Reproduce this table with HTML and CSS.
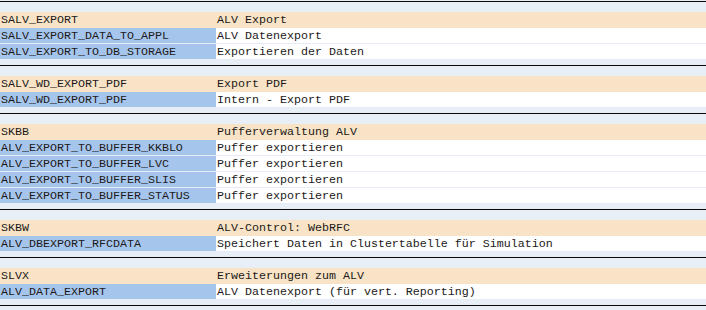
FILE: index.html
```html
<!DOCTYPE html>
<html>
<head>
<meta charset="utf-8">
<link rel="stylesheet" href="styles.css">
</head>
<body>
<div class="list">
  <section class="group">
    <div class="row head"><span class="name">SALV_EXPORT</span><span class="desc">ALV Export</span></div>
    <div class="row"><span class="name">SALV_EXPORT_DATA_TO_APPL</span><span class="desc">ALV Datenexport</span></div>
    <div class="row"><span class="name">SALV_EXPORT_TO_DB_STORAGE</span><span class="desc">Exportieren der Daten</span></div>
  </section>
  <section class="group">
    <div class="row head"><span class="name">SALV_WD_EXPORT_PDF</span><span class="desc">Export PDF</span></div>
    <div class="row"><span class="name">SALV_WD_EXPORT_PDF</span><span class="desc">Intern - Export PDF</span></div>
  </section>
  <section class="group">
    <div class="row head"><span class="name">SKBB</span><span class="desc">Pufferverwaltung ALV</span></div>
    <div class="row"><span class="name">ALV_EXPORT_TO_BUFFER_KKBLO</span><span class="desc">Puffer exportieren</span></div>
    <div class="row"><span class="name">ALV_EXPORT_TO_BUFFER_LVC</span><span class="desc">Puffer exportieren</span></div>
    <div class="row"><span class="name">ALV_EXPORT_TO_BUFFER_SLIS</span><span class="desc">Puffer exportieren</span></div>
    <div class="row"><span class="name">ALV_EXPORT_TO_BUFFER_STATUS</span><span class="desc">Puffer exportieren</span></div>
  </section>
  <section class="group">
    <div class="row head"><span class="name">SKBW</span><span class="desc">ALV-Control: WebRFC</span></div>
    <div class="row"><span class="name">ALV_DBEXPORT_RFCDATA</span><span class="desc">Speichert Daten in Clustertabelle für Simulation</span></div>
  </section>
  <section class="group">
    <div class="row head"><span class="name">SLVX</span><span class="desc">Erweiterungen zum ALV</span></div>
    <div class="row"><span class="name">ALV_DATA_EXPORT</span><span class="desc">ALV Datenexport (für vert. Reporting)</span></div>
  </section>
  <section class="group end"></section>
</div>
</body>
</html>
```

FILE: styles.css
```css
html, body {
  margin: 0;
  padding: 0;
  background: #e8eef6;
}
body {
  padding-top: 1px;
  font-family: "Liberation Mono", "Courier New", monospace;
  font-size: 11.6667px;
  color: #1c1a18;
  overflow: hidden;
}
.list {
  display: flex;
  flex-direction: column;
}
.group {
  border-top: 1px solid #0a0a0a;
  padding: 10px 0 5px;
  display: flex;
  flex-direction: column;
}
.group.end {
  padding: 0;
  height: 10px;
}
.row {
  display: grid;
  grid-template-columns: 216px 1fr;
  height: 15px;
  border-bottom: 1px solid #e6ecf4;
}
.row span {
  padding: 2px 0 0 1px;
  line-height: 13px;
  white-space: pre;
  overflow: hidden;
}
.row .name {
  background: #a6c5ec;
}
.row .desc {
  background: #ffffff;
}
.row.head {
  background: #f8e3c6;
  border-bottom-color: #f8e3c6;
}
.row.head .name,
.row.head .desc {
  background: transparent;
}
```
